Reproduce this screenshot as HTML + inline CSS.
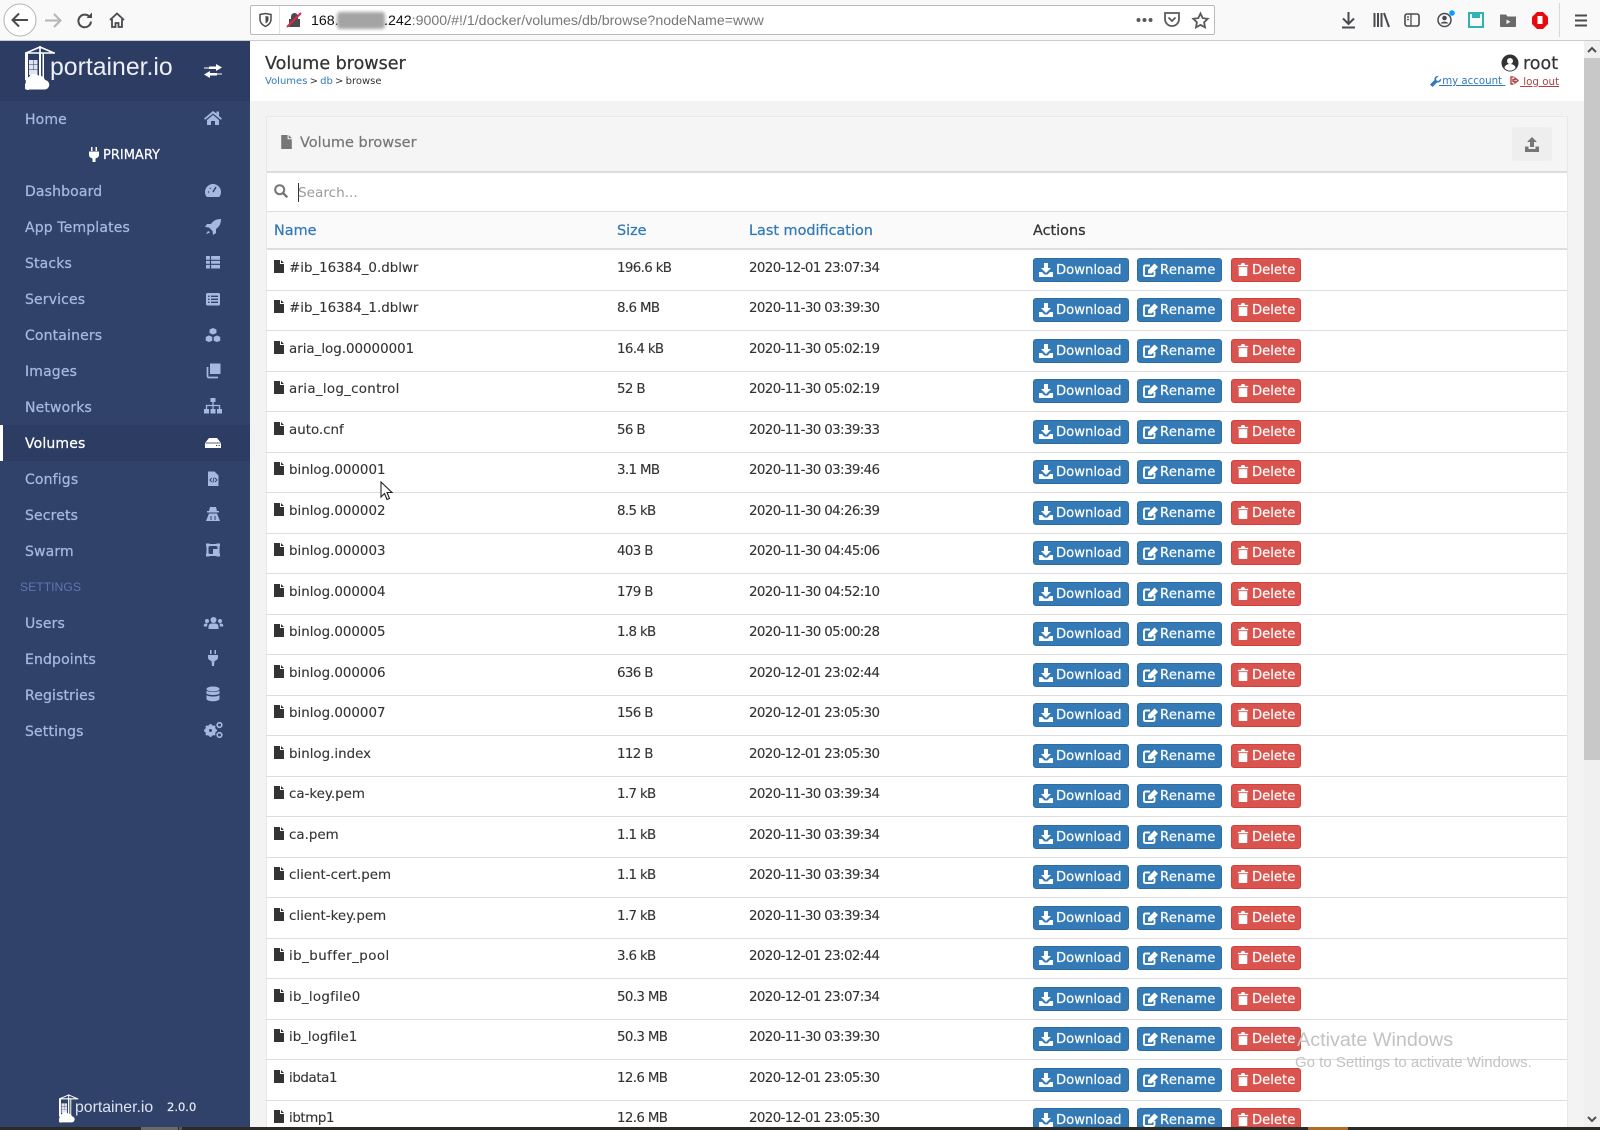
<!DOCTYPE html>
<html><head><meta charset="utf-8"><title>Volume browser</title>
<style>
*{box-sizing:border-box}
html,body{margin:0;padding:0;width:1600px;height:1130px;overflow:hidden;background:#f3f3f3;font-family:"DejaVu Sans","Liberation Sans",sans-serif;color:#333}
#root{position:absolute;left:0;top:0;width:1600px;height:1130px;overflow:hidden;background:#f3f3f3}
.a{position:absolute;white-space:nowrap}
svg{display:block;overflow:visible}
.i{position:absolute}
#top{position:absolute;left:0;top:0;width:1600px;height:41px;background:#f9f9fa;border-bottom:1px solid #ccc}
#url{position:absolute;left:250px;top:5px;width:965px;height:30px;background:#fff;border:1px solid #b9b9bb;border-radius:2px}
#side{position:absolute;left:0;top:41px;width:250px;height:1086px;background:#30426a}
#sidehead{position:absolute;left:0;top:41px;width:250px;height:60px;background:#2c3c62}
.m{position:absolute;left:25px;margin-top:1px;font-size:14px;letter-spacing:.15px;color:#a7b8df;transform:translateY(-50%);-webkit-text-stroke:.25px #a7b8df;white-space:nowrap}
.mi{position:absolute;left:204px;width:18px;height:18px;color:#a7b8df;margin-top:-1px}
.z{margin-top:0}
#hd{position:absolute;left:250px;top:41px;width:1334px;height:60px;background:#fff}
#panel{position:absolute;left:266px;top:116px;width:1302px;height:1011px;background:#fff;border:1px solid #e8e8e8;border-bottom:0}
.r{position:absolute;left:266px;width:1301px;height:41px;border-bottom:1px solid #ddd}
.r>span{position:absolute;top:11px;font-size:13.4px;color:#333;white-space:nowrap;line-height:16px;-webkit-text-stroke:.12px #333}
.r .n{left:23px}.r .s{left:351px;letter-spacing:-.65px}.r .d{left:483px;letter-spacing:-.62px}
.r>svg{position:absolute;left:8px;top:10px;width:10px;height:13px;color:#333}
.b{position:absolute;top:8px;height:24px;border-radius:3px;color:#fff;font-size:13.2px;line-height:22px;border:1px solid;-webkit-text-stroke:.2px #fff}
.b svg{position:absolute;left:5px;top:4px;width:14px;height:14px}
.b b{position:absolute;left:22px;top:1px;font-weight:400;white-space:nowrap}
.dl{left:767px;width:96px;background:#337ab7;border-color:#2e6da4}
.rn{left:871px;width:85px;background:#337ab7;border-color:#2e6da4}
.rn b{letter-spacing:.25px}
.rn svg{width:15px}
.de{left:965px;width:70px;background:#d9534f;border-color:#d43f3a}
.de b{left:20px}
.de svg{width:12px;height:13px}
.th{position:absolute;top:223px;font-size:14.4px;color:#337ab7;-webkit-text-stroke:.25px currentColor;white-space:nowrap;line-height:16px}
</style></head><body><div id="root">
<svg width="0" height="0" style="position:absolute">
<symbol id="file" viewBox="0 0 10 13"><path fill="currentColor" d="M0 0h6v4h4v9H0zM7 0l3 3H7z"/></symbol>
<symbol id="dn" viewBox="0 0 14 14"><path fill="#fff" d="M5 0h4v5h3L7 10 2 5h3zM0 9h3l2.500 2.500h3L11 9h3v5H0z"/></symbol>
<symbol id="ed" viewBox="0 0 15 14" preserveAspectRatio="none"><path fill="none" stroke="#fff" stroke-width="1.900" d="M7 2.500H2.500q-1.500 0-1.500 1.500v7.500q0 1.500 1.500 1.500H10q1.500 0 1.500-1.500V8"/><path fill="#fff" d="M5 7l6.500-6.500 3.500 3.500-6.500 6.500H5z"/></symbol>
<symbol id="tr" viewBox="0 0 14 14" preserveAspectRatio="none"><path fill="#fff" d="M1 2h3.500l1-2h3l1 2H13v1.500H1zM2 4.500h10V13q0 1-1 1H3q-1 0-1-1z"/></symbol>
<symbol id="logo" viewBox="0 0 31 44"><path d="M0 7h30M15 1L1 7M15 1l14 6M15 0v8" fill="none" stroke="#fff" stroke-width="1.600"/><path d="M14 7h2v25h-2zM17.500 7h1.500v25h-1.500zM0 7h3v27H0z" fill="#fff"/><path d="M4 14h4.500v4.500H4zM9 14h3.500v4.500H9zM4 19h4.500v4.500H4zM9 19h3.500v4.500H9zM4 24h8.500v5H4z" fill="#dfe4ef"/><path d="M1 37a4.500 4.500 0 0 1 3-6 6 6 0 0 1 10-1 5 5 0 0 1 6 4 4.500 4.500 0 0 1-1 9.500H4.500A3.500 3.500 0 0 1 1 37z" fill="#fff"/></symbol>
</svg>

<div id="top"></div>
<svg class="i" style="left:3px;top:3px" width="34" height="34" viewBox="0 0 34 34"><circle cx="17" cy="17" r="16" fill="#fff" stroke="#b3b3b3"/><path d="M25 17H10M16 10.500L9.500 17l6.500 6.500" fill="none" stroke="#4a4a4f" stroke-width="2"/></svg>
<svg class="i" style="left:44px;top:12px" width="18" height="17" viewBox="0 0 18 17"><path d="M1 8.500h15M10 2l6.500 6.500L10 15" fill="none" stroke="#b5b5b7" stroke-width="2"/></svg>
<svg class="i" style="left:77px;top:12px" width="16" height="16" viewBox="0 0 16 16"><path d="M13 5.500A6.300 6.300 0 1 0 14 9.500" fill="none" stroke="#4a4a4f" stroke-width="2"/><path d="M9.500 6H15V.5z" fill="#4a4a4f"/></svg>
<svg class="i" style="left:109px;top:12px" width="16" height="16" viewBox="0 0 16 16"><path d="M1 8l7-6.500L15 8M3 7v8h3.500v-4h3v4H13V7" fill="none" stroke="#4a4a4f" stroke-width="1.800"/></svg>

<div id="url"></div>
<svg class="i" style="left:259px;top:13px" width="13" height="14" viewBox="0 0 13 14"><path d="M1 1.500l5.500-1 5.500 1v5c0 3.500-2.500 5.500-5.500 7C3.500 12 1 10 1 6.500z" fill="none" stroke="#4a4a4f" stroke-width="1.500"/><path d="M6.500 3l3 .5v3c0 2-1.300 3-3 4z" fill="#4a4a4f"/></svg>
<div class="a" style="left:279px;top:6px;width:1px;height:28px;background:#e2e2e2"></div>
<svg class="i" style="left:287px;top:12px" width="15" height="16" viewBox="0 0 15 16"><path d="M2 7h11v8H2zM4 7V4.500a3.500 3.500 0 0 1 7 0V7" fill="#4a4a4f"/><path d="M0 15L14 1" stroke="#e22850" stroke-width="2"/></svg>
<div class="a" style="left:311px;top:13px;font:14.200px/17px 'Liberation Sans',sans-serif;color:#111">168.</div>
<div class="a" style="left:337px;top:12px;width:48px;height:17px;background:#a4a4a4;filter:blur(1.500px);border-radius:3px"></div>
<div class="a" style="left:384px;top:13px;font:14.200px/17px 'Liberation Sans',sans-serif;color:#777"><span style="color:#111">.242</span>:9000/#!/1/docker/volumes/db/browse?nodeName=www</div>
<svg class="i" style="left:1136px;top:17px" width="17" height="6" viewBox="0 0 17 6"><circle cx="2.500" cy="3" r="2" fill="#5a5a5d"/><circle cx="8.500" cy="3" r="2" fill="#5a5a5d"/><circle cx="14.500" cy="3" r="2" fill="#5a5a5d"/></svg>
<svg class="i" style="left:1164px;top:12px" width="16" height="15" viewBox="0 0 16 15"><path d="M1 1h14v6a7 7 0 0 1-14 0z" fill="none" stroke="#5a5a5d" stroke-width="1.800"/><path d="M4.500 5.500L8 9l3.500-3.500" fill="none" stroke="#5a5a5d" stroke-width="1.800"/></svg>
<svg class="i" style="left:1192px;top:12px" width="17" height="17" viewBox="0 0 17 17"><path d="M8.500 1.500l2.200 4.600 5 .7-3.600 3.500.9 5-4.500-2.400L4 15.300l.9-5L1.300 6.800l5-.7z" fill="none" stroke="#5a5a5d" stroke-width="1.800"/></svg>
<svg class="i" style="left:1341px;top:12px" width="15" height="17" viewBox="0 0 15 17"><path d="M7.500 0v11M2 6.500l5.500 5.500L13 6.500M1 15.500h13" fill="none" stroke="#4a4a4f" stroke-width="2"/></svg>
<svg class="i" style="left:1373px;top:13px" width="17" height="15" viewBox="0 0 17 15"><path d="M1.500 0v14M5 0v14M8.500 0v14M11 0l5 14" fill="none" stroke="#4a4a4f" stroke-width="2"/></svg>
<svg class="i" style="left:1404px;top:13px" width="16" height="14" viewBox="0 0 16 14"><rect x="1" y="1" width="14" height="12" rx="2" fill="none" stroke="#4a4a4f" stroke-width="1.600"/><path d="M7 1v12M3 4h2M3 6.500h2" stroke="#4a4a4f" stroke-width="1.300"/></svg>
<svg class="i" style="left:1437px;top:10px" width="18" height="18" viewBox="0 0 18 18"><circle cx="7.500" cy="10" r="6.500" fill="none" stroke="#4a4a4f" stroke-width="1.500"/><circle cx="7.500" cy="8" r="2.300" fill="#4a4a4f"/><path d="M3.500 13.500a4.500 3.500 0 0 1 8 0z" fill="#4a4a4f"/><circle cx="15" cy="3" r="2.800" fill="#0a9dff"/></svg>
<svg class="i" style="left:1468px;top:12px" width="16" height="16" viewBox="0 0 16 16"><path d="M1 1h14v14H1z" fill="none" stroke="#2fb3b3" stroke-width="2"/><path d="M4 1h8v5H4z" fill="#2fb3b3"/></svg>
<svg class="i" style="left:1500px;top:13px" width="16" height="14" viewBox="0 0 16 14"><path d="M0 1.500h6l1.500 2H16V13a1 1 0 0 1-1 1H1a1 1 0 0 1-1-1z" fill="#6a6a6a"/><path d="M6.500 6.500l4 2.300-4 2.300z" fill="#f2f2f2"/></svg>
<svg class="i" style="left:1532px;top:12px" width="16" height="17" viewBox="0 0 16 17"><path d="M5 0h6l5 5v7l-5 5H5l-5-5V5z" fill="#e8090f"/><path d="M5.500 4h5v8h-5z" fill="#fff"/></svg>
<div class="a" style="left:1559px;top:3px;width:1px;height:34px;background:#d9d9d9"></div>
<svg class="i" style="left:1575px;top:14px" width="12" height="13" viewBox="0 0 12 13"><path d="M0 1.500h12M0 6.500h12M0 11.500h12" stroke="#4a4a4f" stroke-width="2"/></svg>

<div id="side"></div>
<div id="sidehead"></div>
<svg class="i" style="left:25px;top:46px" width="31" height="44" viewBox="0 0 31 44"><use href="#logo"/></svg>
<div class="a" style="left:50px;top:53px;font:24.800px/30px 'Liberation Sans',sans-serif;color:#eceff5">portainer.io</div>
<svg class="i" style="left:204px;top:64px" width="18" height="14" viewBox="0 0 18 14"><path d="M0 3.500h5v-1h7V0l6 3.500L12 7V5H5V4.500H0zM18 10.500h-5v1H6V14L0 10.500 6 7v2h7v.5h5z" fill="#fff"/></svg>

<div class="m" style="top:119px">Home</div>
<svg class="mi" style="top:109px" viewBox="0 0 18 18"><path fill="currentColor" d="M9 3L0 10.500l1.200 1.200L9 5.500l7.800 6.200 1.200-1.200-3-2.500V3.500h-2.500v2zM3 12l6-5 6 5v5h-4v-4H7v4H3z"/></svg>
<svg class="i" style="left:89px;top:147px" width="10" height="15" viewBox="0 0 10 15"><path fill="#fff" d="M2 0h1.500v4H2zM6.500 0H8v4H6.500zM0 4.500h10V8c0 2-2 3-3.500 3.500V15h-3v-3.500C2 11 0 10 0 8z"/></svg>
<div class="a" style="left:103px;top:148px;font-size:13px;line-height:15px;color:#fff;-webkit-text-stroke:.2px #fff">PRIMARY</div>
<div class="m" style="top:191px">Dashboard</div>
<svg class="mi z" style="top:182px" viewBox="0 0 18 18"><path fill="currentColor" d="M9 2a8 8 0 0 0-8 8c0 2 .7 4 2 5h12c1.300-1 2-3 2-5a8 8 0 0 0-8-8z"/><path d="M9 10l3-5M4 10h1M6 6l.7.7" stroke="#30426a" stroke-width="1.500"/></svg>
<div class="m" style="top:227px">App Templates</div>
<svg class="mi z" style="top:218px" viewBox="0 0 18 18"><path fill="currentColor" d="M17 1c-5 0-8 2-10 5H3L1 9l4 .5L8.500 13l.5 4 3-2v-4c3-2 5-5 5-10zM4 13l-2 3 3-1 1-1z"/></svg>
<div class="m" style="top:263px">Stacks</div>
<svg class="mi" style="top:254px" viewBox="0 0 18 18"><path fill="currentColor" d="M2 3h14v12.500H2z"/><path d="M2 7.300h14M2 11.300h14M6.500 3v12.500" stroke="#30426a" stroke-width="1.200"/></svg>
<div class="m" style="top:299px">Services</div>
<svg class="mi z" style="top:290px" viewBox="0 0 18 18"><rect x="2" y="3" width="14" height="12.500" rx="1.500" fill="currentColor"/><path d="M4 6.300h1.500M7 6.300h7M4 9.300h1.500M7 9.300h7M4 12.300h1.500M7 12.300h7" stroke="#30426a" stroke-width="1.300"/></svg>
<div class="m" style="top:335px">Containers</div>
<svg class="mi z" style="top:326px" viewBox="0 0 18 18"><path fill="currentColor" stroke="#30426a" stroke-width=".7" d="M9 1.500l3.800 1.800v4L9 9 5.200 7.300v-4zM5 9l3.600 1.700v4.200L5 16.500 1.400 14.900v-4.200zM13 9l3.600 1.700v4.200L13 16.500l-3.600-1.600v-4.200z"/></svg>
<div class="m" style="top:371px">Images</div>
<svg class="mi z" style="top:362px" viewBox="0 0 18 18"><path fill="currentColor" d="M6 1.500h10.500V12H6z"/><path fill="none" stroke="currentColor" stroke-width="1.700" d="M3.500 5v9c0 1 .5 1.500 1.500 1.500h9"/></svg>
<div class="m" style="top:407px">Networks</div>
<svg class="mi" style="top:398px" viewBox="0 0 18 18"><path fill="currentColor" d="M6.500 1h5v4h-5zM0 12h5v4.500H0zM6.500 12h5v4.500h-5zM13 12h5v4.500h-5z"/><path fill="none" stroke="currentColor" stroke-width="1.300" d="M9 5v7M2.500 12V8.500h13V12"/></svg>
<div class="a" style="left:0;top:425px;width:250px;height:36px;background:#2c3c62"></div>
<div class="a" style="left:0;top:425px;width:3px;height:36px;background:#fff"></div>
<div class="m" style="top:443px;color:#fff;-webkit-text-stroke-color:#fff">Volumes</div>
<svg class="mi z" style="top:434px;color:#fff" viewBox="0 0 18 18"><path fill="currentColor" d="M5 4h8l4 5v5H1V9z"/><path d="M1.500 9h15" stroke="#2c3c62" stroke-width=".8"/><path d="M12 11.500h1.200M14.500 11.500h1.200" stroke="#2c3c62" stroke-width="1"/></svg>
<div class="m" style="top:479px">Configs</div>
<svg class="mi z" style="top:470px" viewBox="0 0 18 18"><path fill="currentColor" d="M4 1.500h6.500L14.500 5.500V16H4z"/><path d="M7.800 8l-2 2 2 2M11 8l2 2-2 2M10 7.500L9 12.500" stroke="#30426a" stroke-width=".9" fill="none"/></svg>
<div class="m" style="top:515px">Secrets</div>
<svg class="mi" style="top:506px" viewBox="0 0 18 18"><path fill="currentColor" d="M6 2h6l1 4h2v1.500H3V6h2zM5 8.500h8l3 7.500H2z"/><path d="M7 11v4M11 11v4" stroke="#30426a" stroke-width="1"/></svg>
<div class="m" style="top:551px">Swarm</div>
<svg class="mi" style="top:542px" viewBox="0 0 18 18"><path fill="none" stroke="currentColor" stroke-width="2" d="M3.500 4h11v10h-11z"/><path fill="currentColor" d="M2 2.500h3.500v3H2zM12.500 2.500H16v3h-3.500zM2 12.500h3.500v3H2zM12.500 12.500H16v3h-3.500zM9 8h5v5H9z"/></svg>
<div class="a" style="left:20px;top:579px;font:12.200px/17px 'Liberation Sans',sans-serif;color:#5d76ad">SETTINGS</div>
<div class="m" style="top:623px">Users</div>
<svg class="mi z" style="top:614px;left:204px;width:19px" viewBox="0 0 19 18"><circle cx="9.500" cy="6" r="3" fill="currentColor"/><circle cx="3" cy="7" r="2" fill="currentColor"/><circle cx="16" cy="7" r="2" fill="currentColor"/><path fill="currentColor" d="M4.500 15v-2.500a3 3 0 0 1 3-3h4a3 3 0 0 1 3 3V15zM0 12.500a2 2 0 0 1 2-3h1.500l-.5 3zM19 12.500a2 2 0 0 0-2-3h-1.500l.5 3z"/></svg>
<div class="m" style="top:659px">Endpoints</div>
<svg class="mi" style="top:650px" viewBox="0 0 18 18"><path fill="currentColor" d="M6 1h1.500v4H6zM10.500 1H12v4h-1.500zM4 6h10v2.500c0 2-2 3-3.500 3.500l-.5 5H8l-.5-5C6 11.500 4 10.500 4 8.500z"/></svg>
<div class="m" style="top:695px">Registries</div>
<svg class="mi" style="top:686px" viewBox="0 0 18 18"><ellipse cx="9" cy="4" rx="6.500" ry="2.500" fill="currentColor"/><path fill="currentColor" d="M2.500 5.500c1 2 12 2 13 0V8.500c-1 2-12 2-13 0zM2.500 10c1 2 12 2 13 0v4c-1 3-12 3-13 0z"/></svg>
<div class="m" style="top:731px">Settings</div>
<svg class="mi" style="top:722px;left:204px;width:19px" viewBox="0 0 19 18"><circle cx="6.500" cy="9.500" r="4" fill="none" stroke="currentColor" stroke-width="3"/><path d="M6.500 3v13M0 9.500h13M2 5l9 9M11 5l-9 9" stroke="currentColor" stroke-width="2" /><circle cx="6.500" cy="9.500" r="1.500" fill="#30426a"/><circle cx="15.500" cy="4" r="2.300" fill="none" stroke="currentColor" stroke-width="1.600"/><circle cx="15.500" cy="14" r="2.300" fill="none" stroke="currentColor" stroke-width="1.600"/></svg>

<svg class="i" style="left:59px;top:1094px" width="20" height="29" viewBox="0 0 31 44"><use href="#logo"/></svg>
<div class="a" style="left:75px;top:1098px;font:15.800px/20px 'Liberation Sans',sans-serif;color:#dfe3ed">portainer.io</div>
<div class="a" style="left:167px;top:1100px;font-size:11.500px;line-height:15px;color:#e6e9f1;-webkit-text-stroke:.2px #e6e9f1">2.0.0</div>

<div id="hd"></div>
<div class="a" style="left:265px;top:53px;font-size:17.500px;line-height:22px;color:#333;-webkit-text-stroke:.25px #333">Volume browser</div>
<div class="a" style="left:265px;top:75px;font-size:10px;line-height:14px;color:#333;word-spacing:-1px"><span style="color:#337ab7">Volumes</span> &gt; <span style="color:#337ab7">db</span> &gt; browse</div>
<svg class="i" style="left:1501px;top:54px" width="18" height="18" viewBox="0 0 18 18"><circle cx="9" cy="9" r="8.500" fill="#333"/><circle cx="9" cy="7" r="3" fill="#fff"/><path d="M3.500 14a5.500 4 0 0 1 11 0 7 7 0 0 1-11 0z" fill="#fff"/></svg>
<div class="a" style="left:1523px;top:53px;font-size:17.500px;line-height:22px;color:#333;-webkit-text-stroke:.2px #333">root</div>
<svg class="i" style="left:1430px;top:76px" width="11" height="11" viewBox="0 0 11 11"><path d="M11 2.500L8.500 5 6.500 4.500 6 2.500 8.500 0C6.500-.5 4 1 4.500 4L0 8.500 2.500 11 7 6.500c3 .5 4.500-2 4-4z" fill="#337ab7"/></svg>
<div class="a" style="left:1439px;top:75px;font-size:10.200px;line-height:14px;color:#337ab7;text-decoration:underline;white-space:pre"> my account </div>
<svg class="i" style="left:1510px;top:76px" width="10" height="9" viewBox="0 0 10 9"><path d="M3.500 1H1v7h2.500M5 2l3 2.500L5 7V5.500H3v-2h2z" fill="none" stroke="#a94442" stroke-width="1.400"/></svg>
<div class="a" style="left:1520px;top:75px;font-size:10.300px;line-height:14px;color:#a94442;text-decoration:underline;white-space:pre"> log out</div>

<div id="panel"></div>
<div class="a" style="left:267px;top:117px;width:1300px;height:54px;background:#f5f5f5"></div>
<div class="a" style="left:267px;top:171px;width:1300px;height:2px;background:#ddd"></div>
<svg class="i" style="left:281px;top:135px;color:#767676" width="11" height="14" viewBox="0 0 10 13"><use href="#file"/></svg>
<div class="a" style="left:300px;top:134px;font-size:14.500px;line-height:18px;color:#767676;-webkit-text-stroke:.2px #767676">Volume browser</div>
<div class="a" style="left:1512px;top:127px;width:40px;height:34px;background:#eee;border-radius:3px"></div>
<svg class="i" style="left:1525px;top:137px" width="14" height="15" viewBox="0 0 14 15"><path fill="#767676" d="M7 0l5 5H9v5H5V5H2zM0 9.500h3.500V12h7V9.500H14V15H0z"/></svg>

<svg class="i" style="left:274px;top:184px" width="14" height="14" viewBox="0 0 14 14"><circle cx="5.700" cy="5.700" r="4.500" fill="none" stroke="#767676" stroke-width="2"/><path d="M9 9l4.300 4.300" stroke="#767676" stroke-width="2.400"/></svg>
<div class="a" style="left:298px;top:183px;width:1px;height:19px;background:#333"></div>
<div class="a" style="left:298px;top:184px;font-size:13.600px;line-height:18px;color:#999">Search...</div>
<div class="a" style="left:267px;top:211px;width:1300px;height:1px;background:#ddd"></div>
<div class="a" style="left:267px;top:212px;width:1300px;height:36px;background:#fafafa"></div>
<div class="a" style="left:267px;top:248px;width:1300px;height:2px;background:#ddd"></div>
<div class="th" style="left:274px">Name</div>
<div class="th" style="left:617px">Size</div>
<div class="th" style="left:749px">Last modification</div>
<div class="th" style="left:1033px;color:#333">Actions</div>

<div class="r" style="top:250px"><svg><use href="#file"/></svg><span class="n">#ib_16384_0.dblwr</span><span class="s">196.6 kB</span><span class="d">2020-12-01 23:07:34</span><div class="b dl"><svg><use href="#dn"/></svg><b>Download</b></div><div class="b rn"><svg><use href="#ed"/></svg><b>Rename</b></div><div class="b de"><svg><use href="#tr"/></svg><b>Delete</b></div></div>
<div class="r" style="top:290px"><svg><use href="#file"/></svg><span class="n">#ib_16384_1.dblwr</span><span class="s">8.6 MB</span><span class="d">2020-11-30 03:39:30</span><div class="b dl"><svg><use href="#dn"/></svg><b>Download</b></div><div class="b rn"><svg><use href="#ed"/></svg><b>Rename</b></div><div class="b de"><svg><use href="#tr"/></svg><b>Delete</b></div></div>
<div class="r" style="top:331px"><svg><use href="#file"/></svg><span class="n">aria_log.00000001</span><span class="s">16.4 kB</span><span class="d">2020-11-30 05:02:19</span><div class="b dl"><svg><use href="#dn"/></svg><b>Download</b></div><div class="b rn"><svg><use href="#ed"/></svg><b>Rename</b></div><div class="b de"><svg><use href="#tr"/></svg><b>Delete</b></div></div>
<div class="r" style="top:371px"><svg><use href="#file"/></svg><span class="n" style="letter-spacing:.3px">aria_log_control</span><span class="s">52 B</span><span class="d">2020-11-30 05:02:19</span><div class="b dl"><svg><use href="#dn"/></svg><b>Download</b></div><div class="b rn"><svg><use href="#ed"/></svg><b>Rename</b></div><div class="b de"><svg><use href="#tr"/></svg><b>Delete</b></div></div>
<div class="r" style="top:412px"><svg><use href="#file"/></svg><span class="n">auto.cnf</span><span class="s">56 B</span><span class="d">2020-11-30 03:39:33</span><div class="b dl"><svg><use href="#dn"/></svg><b>Download</b></div><div class="b rn"><svg><use href="#ed"/></svg><b>Rename</b></div><div class="b de"><svg><use href="#tr"/></svg><b>Delete</b></div></div>
<div class="r" style="top:452px"><svg><use href="#file"/></svg><span class="n">binlog.000001</span><span class="s">3.1 MB</span><span class="d">2020-11-30 03:39:46</span><div class="b dl"><svg><use href="#dn"/></svg><b>Download</b></div><div class="b rn"><svg><use href="#ed"/></svg><b>Rename</b></div><div class="b de"><svg><use href="#tr"/></svg><b>Delete</b></div></div>
<div class="r" style="top:493px"><svg><use href="#file"/></svg><span class="n">binlog.000002</span><span class="s">8.5 kB</span><span class="d">2020-11-30 04:26:39</span><div class="b dl"><svg><use href="#dn"/></svg><b>Download</b></div><div class="b rn"><svg><use href="#ed"/></svg><b>Rename</b></div><div class="b de"><svg><use href="#tr"/></svg><b>Delete</b></div></div>
<div class="r" style="top:533px"><svg><use href="#file"/></svg><span class="n">binlog.000003</span><span class="s">403 B</span><span class="d">2020-11-30 04:45:06</span><div class="b dl"><svg><use href="#dn"/></svg><b>Download</b></div><div class="b rn"><svg><use href="#ed"/></svg><b>Rename</b></div><div class="b de"><svg><use href="#tr"/></svg><b>Delete</b></div></div>
<div class="r" style="top:574px"><svg><use href="#file"/></svg><span class="n">binlog.000004</span><span class="s">179 B</span><span class="d">2020-11-30 04:52:10</span><div class="b dl"><svg><use href="#dn"/></svg><b>Download</b></div><div class="b rn"><svg><use href="#ed"/></svg><b>Rename</b></div><div class="b de"><svg><use href="#tr"/></svg><b>Delete</b></div></div>
<div class="r" style="top:614px"><svg><use href="#file"/></svg><span class="n">binlog.000005</span><span class="s">1.8 kB</span><span class="d">2020-11-30 05:00:28</span><div class="b dl"><svg><use href="#dn"/></svg><b>Download</b></div><div class="b rn"><svg><use href="#ed"/></svg><b>Rename</b></div><div class="b de"><svg><use href="#tr"/></svg><b>Delete</b></div></div>
<div class="r" style="top:655px"><svg><use href="#file"/></svg><span class="n">binlog.000006</span><span class="s">636 B</span><span class="d">2020-12-01 23:02:44</span><div class="b dl"><svg><use href="#dn"/></svg><b>Download</b></div><div class="b rn"><svg><use href="#ed"/></svg><b>Rename</b></div><div class="b de"><svg><use href="#tr"/></svg><b>Delete</b></div></div>
<div class="r" style="top:695px"><svg><use href="#file"/></svg><span class="n">binlog.000007</span><span class="s">156 B</span><span class="d">2020-12-01 23:05:30</span><div class="b dl"><svg><use href="#dn"/></svg><b>Download</b></div><div class="b rn"><svg><use href="#ed"/></svg><b>Rename</b></div><div class="b de"><svg><use href="#tr"/></svg><b>Delete</b></div></div>
<div class="r" style="top:736px"><svg><use href="#file"/></svg><span class="n">binlog.index</span><span class="s">112 B</span><span class="d">2020-12-01 23:05:30</span><div class="b dl"><svg><use href="#dn"/></svg><b>Download</b></div><div class="b rn"><svg><use href="#ed"/></svg><b>Rename</b></div><div class="b de"><svg><use href="#tr"/></svg><b>Delete</b></div></div>
<div class="r" style="top:776px"><svg><use href="#file"/></svg><span class="n">ca-key.pem</span><span class="s">1.7 kB</span><span class="d">2020-11-30 03:39:34</span><div class="b dl"><svg><use href="#dn"/></svg><b>Download</b></div><div class="b rn"><svg><use href="#ed"/></svg><b>Rename</b></div><div class="b de"><svg><use href="#tr"/></svg><b>Delete</b></div></div>
<div class="r" style="top:817px"><svg><use href="#file"/></svg><span class="n">ca.pem</span><span class="s">1.1 kB</span><span class="d">2020-11-30 03:39:34</span><div class="b dl"><svg><use href="#dn"/></svg><b>Download</b></div><div class="b rn"><svg><use href="#ed"/></svg><b>Rename</b></div><div class="b de"><svg><use href="#tr"/></svg><b>Delete</b></div></div>
<div class="r" style="top:857px"><svg><use href="#file"/></svg><span class="n">client-cert.pem</span><span class="s">1.1 kB</span><span class="d">2020-11-30 03:39:34</span><div class="b dl"><svg><use href="#dn"/></svg><b>Download</b></div><div class="b rn"><svg><use href="#ed"/></svg><b>Rename</b></div><div class="b de"><svg><use href="#tr"/></svg><b>Delete</b></div></div>
<div class="r" style="top:898px"><svg><use href="#file"/></svg><span class="n">client-key.pem</span><span class="s">1.7 kB</span><span class="d">2020-11-30 03:39:34</span><div class="b dl"><svg><use href="#dn"/></svg><b>Download</b></div><div class="b rn"><svg><use href="#ed"/></svg><b>Rename</b></div><div class="b de"><svg><use href="#tr"/></svg><b>Delete</b></div></div>
<div class="r" style="top:938px"><svg><use href="#file"/></svg><span class="n" style="letter-spacing:.45px">ib_buffer_pool</span><span class="s">3.6 kB</span><span class="d">2020-12-01 23:02:44</span><div class="b dl"><svg><use href="#dn"/></svg><b>Download</b></div><div class="b rn"><svg><use href="#ed"/></svg><b>Rename</b></div><div class="b de"><svg><use href="#tr"/></svg><b>Delete</b></div></div>
<div class="r" style="top:979px"><svg><use href="#file"/></svg><span class="n" style="letter-spacing:.3px">ib_logfile0</span><span class="s">50.3 MB</span><span class="d">2020-12-01 23:07:34</span><div class="b dl"><svg><use href="#dn"/></svg><b>Download</b></div><div class="b rn"><svg><use href="#ed"/></svg><b>Rename</b></div><div class="b de"><svg><use href="#tr"/></svg><b>Delete</b></div></div>
<div class="r" style="top:1019px"><svg><use href="#file"/></svg><span class="n">ib_logfile1</span><span class="s">50.3 MB</span><span class="d">2020-11-30 03:39:30</span><div class="b dl"><svg><use href="#dn"/></svg><b>Download</b></div><div class="b rn"><svg><use href="#ed"/></svg><b>Rename</b></div><div class="b de"><svg><use href="#tr"/></svg><b>Delete</b></div></div>
<div class="r" style="top:1060px"><svg><use href="#file"/></svg><span class="n" style="letter-spacing:-.4px">ibdata1</span><span class="s">12.6 MB</span><span class="d">2020-12-01 23:05:30</span><div class="b dl"><svg><use href="#dn"/></svg><b>Download</b></div><div class="b rn"><svg><use href="#ed"/></svg><b>Rename</b></div><div class="b de"><svg><use href="#tr"/></svg><b>Delete</b></div></div>
<div class="r" style="top:1100px;height:30px;border-bottom:0"><svg><use href="#file"/></svg><span class="n" style="letter-spacing:-.4px">ibtmp1</span><span class="s">12.6 MB</span><span class="d">2020-12-01 23:05:30</span><div class="b dl"><svg><use href="#dn"/></svg><b>Download</b></div><div class="b rn"><svg><use href="#ed"/></svg><b>Rename</b></div><div class="b de"><svg><use href="#tr"/></svg><b>Delete</b></div></div>

<svg class="i" style="left:380px;top:481px" width="14" height="20" viewBox="0 0 14 20"><path d="M1 1v15l3.500-3.500 2.500 6 2.500-1-2.500-6H12z" fill="#fff" stroke="#222" stroke-width="1.100"/></svg>

<div class="a" style="left:1584px;top:41px;width:16px;height:1086px;background:#f0f0f0"></div>
<div class="a" style="left:1584px;top:58px;width:16px;height:702px;background:#c8c8c8"></div>
<svg class="i" style="left:1586px;top:46px" width="12" height="8" viewBox="0 0 12 8"><path d="M2 6l4-4 4 4" fill="none" stroke="#505050" stroke-width="2"/></svg>
<svg class="i" style="left:1586px;top:1115px" width="12" height="8" viewBox="0 0 12 8"><path d="M2 2l4 4 4-4" fill="none" stroke="#505050" stroke-width="2"/></svg>

<div class="a" style="left:1297px;top:1027px;font:19.800px/27px 'Liberation Sans',sans-serif;color:#c2c2c2">Activate Windows</div>
<div class="a" style="left:1295px;top:1053px;font:15px/20px 'Liberation Sans',sans-serif;color:#c2c2c2">Go to Settings to activate Windows.</div>

<div class="a" style="left:0;top:1127px;width:1600px;height:3px;background:#2c2a25"></div>
<div class="a" style="left:141px;top:1127px;width:37px;height:3px;background:#6a6966"></div>
<div class="a" style="left:179px;top:1127px;width:3px;height:3px;background:#5a5955"></div>
<div class="a" style="left:1308px;top:1127px;width:40px;height:3px;background:#b06c2c"></div>
</div></body></html>
